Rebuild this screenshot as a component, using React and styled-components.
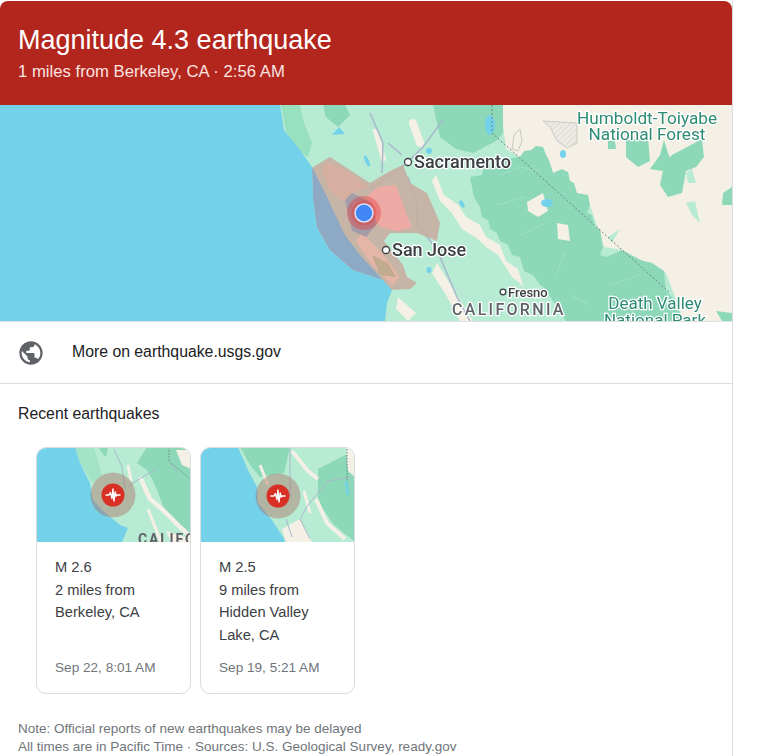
import styled, { createGlobalStyle } from 'styled-components';

const GlobalStyle = createGlobalStyle`
  html, body {
    margin: 0;
    padding: 0;
    background: #fff;
    overflow: hidden;
  }
`;

const Panel = styled.div`
  width: 732px;
  height: 756px;
  box-sizing: content-box;
  overflow: hidden;
  border-right: 1px solid #dadce0;
  font-family: 'Liberation Sans', Arial, sans-serif;
  color: #202124;
`;

const Header = styled.div`
  height: 104px;
  margin-top: 1px;
  box-sizing: border-box;
  padding: 22px 18px 0;
  background: #b3261e;
  border-radius: 8px 8px 0 0;
  color: #fff;
`;

const Title = styled.div`
  font-size: 27px;
  line-height: 34px;
`;

const Subtitle = styled.div`
  margin-top: 4px;
  font-size: 16.7px;
  line-height: 22px;
  color: #fbe3e0;
`;

const HeroMap = styled.svg`
  display: block;
  width: 732px;
  height: 216px;
  filter: blur(0.4px);
`;

const LinkRow = styled.div`
  display: flex;
  align-items: center;
  height: 63px;
  box-sizing: border-box;
  padding-left: 17px;
  border-top: 1px solid #e0e0e0;
  border-bottom: 1px solid #dadce0;
  font-size: 15.8px;
`;

const LinkText = styled.span`
  margin-top: -2px;
`;

const GlobeIcon = styled.svg`
  width: 28px;
  height: 28px;
  margin-right: 27px;
  fill: #5f6368;
`;

const Section = styled.div`
  padding: 20px 18px 0;
`;

const SectionTitle = styled.div`
  font-size: 15.8px;
  line-height: 20px;
`;

const CardRow = styled.div`
  display: flex;
  gap: 9px;
  margin-top: 23px;
  padding-left: 18px;
`;

const Card = styled.div`
  width: 155px;
  height: 247px;
  box-sizing: border-box;
  display: flex;
  flex-direction: column;
  overflow: hidden;
  border: 1px solid #dadce0;
  border-radius: 10px;
`;

const CardMap = styled.svg`
  display: block;
  width: 155px;
  height: 95px;
  margin: -1px -1px 0;
  flex: none;
  filter: blur(0.4px);
`;

const CardBody = styled.div`
  flex: 1;
  display: flex;
  flex-direction: column;
  padding: 14px 10px 14px 18px;
  font-size: 14.7px;
  line-height: 22.5px;
  color: #3c4043;
`;

const CardDate = styled.div`
  margin-top: auto;
  font-size: 13.6px;
  color: #70757a;
`;

const Notes = styled.div`
  margin-top: 26px;
  font-size: 13.5px;
  line-height: 18px;
  color: #70757a;
`;

const MapLabel = styled.text`
  font-family: Roboto, 'Liberation Sans', sans-serif;
  font-size: ${(p) => p.$size || 18}px;
  font-weight: ${(p) => p.$weight || 500};
  letter-spacing: ${(p) => p.$spacing || 0}px;
  fill: ${(p) => p.$color || '#3c4043'};
  stroke: #fff;
  stroke-width: ${(p) => (p.$halo ? 2.5 : 0)}px;
  paint-order: stroke;
  text-anchor: ${(p) => p.$anchor || 'start'};
`;

const OCEAN = '#74d1ea';
const MINT = '#b8ebd4';
const FOREST = '#8dd8b8';
const SAND = '#f5f0e5';
const ROAD = '#a8b8cc';

function City({ x, y, r = 3.5 }) {
  return <circle cx={x} cy={y} r={r} fill="#fff" stroke="#3c4043" strokeWidth="1.3" />;
}

function Hero() {
  return (
    <HeroMap viewBox="0 0 732 216">
      <defs>
        <pattern id="hatch" width="4" height="4" patternUnits="userSpaceOnUse" patternTransform="rotate(45)">
          <rect width="4" height="4" fill="#ecebe6" />
          <rect width="1" height="4" fill="#dcdbd6" />
        </pattern>
      </defs>
      <rect width="732" height="216" fill={MINT} />
      <path d="M490 0H732V216H684L666 168 622 145 604 142 590 100 577 88 553 68 543 42 520 52 506 44 503 20Z" fill={SAND} />

      {/* central valley strips */}
      <path d="M436 70 444 90 458 100 466 112 480 120 486 132 500 140 506 156 518 164 524 184 520 178 512 172 498 150 486 142 478 134 462 124 452 108 440 96 432 76Z" fill={SAND} />
      <path d="M413 18 420 38" fill="none" stroke={SAND} strokeWidth="8" strokeLinecap="round" />
      <path d="M375 24 384 56" fill="none" stroke={SAND} strokeWidth="5" />
      <path d="M437 158 452 182 473 216H460L446 190 432 168Z" fill={SAND} />
      <path d="M398 192 416 208 408 216 396 204Z" fill={SAND} />

      {/* forests */}
      <path d="M470 72 482 70 484 62 500 60 503 54 520 52 524 46 531 45 536 41 543 42 546 50 549 55 553 68 562 64 568 67 570 76 574 78 577 88 588 90 590 100 587 108 592 110 595 122 600 124 603 142 600 150 607 152 622 145 640 155 652 158 664 166 666 186 672 192 684 216H566L556 200 550 192 547 185 540 180 533 170 524 166 520 152 512 150 508 140 500 136 497 128 490 124 488 115 482 112 480 102 474 92Z" fill={FOREST} />
      <path d="M433 0H503V28L496 36 473 48 456 44 440 32Z" fill={FOREST} />
      <path d="M281 0H300L304 18 312 38 308 52 298 46 286 26Z" fill="#99e0c0" />
      <path d="M323 0 345 0 350 10 338 22 326 12Z" fill={FOREST} />
      <path d="M500 70 520 62 540 66M498 100 524 92M520 130 546 118M556 170 566 146M610 180 640 170M570 190 590 200" fill="none" stroke="#a0e1c5" strokeWidth="1" />
      <path d="M527 97 543 88 548 106 538 112 528 106Z" fill={SAND} />
      <path d="M557 118 568 120 570 136 558 134Z" fill={SAND} />
      <path d="M608 132 620 124 612 138Z" fill={MINT} />

      {/* Humboldt-Toiyabe patches */}
      <path d="M626 35 648 33 650 56 638 62 626 52Z" fill={FOREST} />
      <path d="M650 64 660 50 664 35 668 48 672 58 662 66Z" fill={FOREST} />
      <path d="M664 60 672 50 702 34 704 52 696 62 686 66 682 88 668 92 660 80Z" fill={FOREST} />
      <path d="M608 35 615 36 616 44 608 44Z" fill={FOREST} />
      <path d="M686 68 692 64 696 78 688 78Z" fill={MINT} />
      <path d="M723 88 732 82V100H722Z" fill={FOREST} />
      <path d="M686 98 695 96 700 118 692 110Z" fill={MINT} />
      <path d="M716 206 732 208V216H722Z" fill={FOREST} />

      <path d="M543 16 577 18 577 38 567 43 557 36 550 22Z" fill="url(#hatch)" stroke="#c9c9c4" />
      <path d="M514 30 520 24 522 36 518 46 512 44Z" fill="none" stroke="#c9c9c4" />

      {/* water */}
      <path d="M0 0H280L284 25 300 45 312 62 313 92 317 122 330 145 353 165 383 175 392 185 387 198 385 216H0Z" fill={OCEAN} />
      <ellipse cx="490" cy="20" rx="5" ry="10" fill={OCEAN} />
      <ellipse cx="563" cy="49" rx="3" ry="4" fill={OCEAN} />
      <ellipse cx="547" cy="98" rx="6" ry="4" fill={OCEAN} />
      <ellipse cx="429" cy="46" rx="3" ry="3" fill={OCEAN} />
      <ellipse cx="462" cy="99" rx="2" ry="4" fill={OCEAN} transform="rotate(-30 462 99)" />
      <ellipse cx="429" cy="165" rx="2.5" ry="3" fill={OCEAN} />
      <ellipse cx="367" cy="56" rx="2" ry="6" fill={OCEAN} transform="rotate(-25 367 56)" />
      <path d="M339 22 332 30 345 29Z" fill={OCEAN} />

      {/* roads and border */}
      <path d="M370 8 383 38 382 68M443 15 423 42 407 58 370 85M408 72 417 98 417 118 437 145 457 192 470 216M388 38 402 50" fill="none" stroke={ROAD} strokeWidth="1.5" />
      <path d="M492 0V28L670 188" fill="none" stroke="#6d8580" strokeWidth="1" strokeDasharray="2 2" />

      {/* shake intensity */}
      <path d="M313 62 330 52 350 65 370 78 390 66 403 60 410 78 427 88 440 118 437 136 417 128 390 128 384 136 403 160 407 172 417 178 410 184 392 185 383 175 353 165 330 145 317 122 313 92Z" fill="#c8ab9e" fillOpacity="0.85" />
      <path d="M326 56 350 68 368 82 352 88 344 96 330 86 322 66Z" fill="#e2ab9c" fillOpacity="0.6" />
      <path d="M312 62 313 92 317 122 330 145 353 165 383 175 360 150 345 130 333 105 327 92Z" fill="#8ea9c4" />
      <path d="M366 92 378 82 396 80 406 108 412 122 398 126 380 122 372 108Z" fill="#f4a9a4" fillOpacity="0.85" />
      <path d="M362 128 382 148 400 172 392 180 372 160 356 136Z" fill="#ecb5a8" fillOpacity="0.8" />
      <path d="M372 150 388 158 396 172 380 170Z" fill="#b2a783" fillOpacity="0.7" />
      <path d="M345 95 352 88 372 98 376 120 366 132 352 126Z" fill="#8f8cae" fillOpacity="0.6" />
      <circle cx="364" cy="108" r="17" fill="#e03c3c" fillOpacity="0.4" />
      <circle cx="364" cy="108" r="12.5" fill="#e03c3c" fillOpacity="0.35" />
      <circle cx="364" cy="108" r="9" fill="#4285f4" stroke="#dbe4f5" strokeWidth="1.5" />

      <City x={408} y={57} />
      <City x={386} y={145} />
      <City x={503} y={187} r={2.8} />
      <MapLabel x="414" y="63" $halo>Sacramento</MapLabel>
      <MapLabel x="392" y="151" $halo>San Jose</MapLabel>
      <MapLabel x="508" y="192" $size={13} $halo>Fresno</MapLabel>
      <MapLabel x="452" y="210" $size={16} $spacing={2.3} $color="#5f6368" $halo>CALIFORNIA</MapLabel>
      <MapLabel x="647" y="19" $size={17.2} $anchor="middle" $weight={400} $color="#2e8b74" $halo>Humboldt-Toiyabe</MapLabel>
      <MapLabel x="647" y="35" $size={17.2} $anchor="middle" $weight={400} $color="#2e8b74" $halo>National Forest</MapLabel>
      <MapLabel x="655" y="204" $size={17} $anchor="middle" $weight={400} $color="#2e8b74" $halo>Death Valley</MapLabel>
      <MapLabel x="655" y="221" $size={17} $anchor="middle" $weight={400} $color="#2e8b74" $halo>National Park</MapLabel>
    </HeroMap>
  );
}

function QuakeMarker({ x, y }) {
  return (
    <g transform={`translate(${x} ${y})`}>
      <circle r="22.5" fill="#aa6458" fillOpacity="0.4" />
      <circle r="11.5" fill="#d93025" />
      <path d="M-7.5 0H-4L-2.6 -2.5-1 3.5 0 -6 1 6 2.2 -3 3.2 1 4 0H7.5" fill="none" stroke="#fff" strokeWidth="1.4" strokeLinejoin="round" />
    </g>
  );
}

function BerkeleyMap() {
  return (
    <CardMap viewBox="0 0 155 95">
      <rect width="155" height="95" fill={MINT} />
      <path d="M111 0H155V90L142 80 131 70 126 56 121 43 116 32 111 23 101 16Z" fill={FOREST} />
      <path d="M39 0H58L62 14 66 28 56 36 44 16Z" fill="#a3e3c8" />
      <path d="M62 0H72L70 10 66 6Z" fill={FOREST} />
      <path d="M140 3H155V22L146 18Z" fill={SAND} />
      <path d="M104 30 114 52 127 63 144 80 155 90" fill="none" stroke={SAND} strokeWidth="4.5" strokeLinejoin="round" />
      <path d="M92 18 95 34M112 62 125 95" fill="none" stroke={SAND} strokeWidth="3" />
      <path d="M130 84 155 92V95H135Z" fill={SAND} />
      <path d="M0 0H39L44 16 54 36 57 53 66 63 84 78 92 81 86 95H0Z" fill={OCEAN} />
      <path d="M78 2 86 20 89 42M120 22 100 34 92 40M134 16 142 26" fill="none" stroke={ROAD} strokeWidth="1" />
      <path d="M133 0V14L154 32" fill="none" stroke="#5f8a7e" strokeWidth="1" strokeDasharray="1.5 1.5" />
      <QuakeMarker x={77} y={48} />
      <MapLabel x="102" y="97" $size={14} $spacing={1.8} $weight={700} $color="#5f6368">CALIFORNIA</MapLabel>
    </CardMap>
  );
}

function HiddenValleyMap() {
  return (
    <CardMap viewBox="0 0 155 95">
      <rect width="155" height="95" fill={MINT} />
      <path d="M40 0H90L84 26 60 30 50 18Z" fill={FOREST} />
      <path d="M118 22 155 3V95L134 78 118 55Z" fill={FOREST} />
      <path d="M146 0H155V30L148 24Z" fill={SAND} />
      <path d="M92 4 108 24 118 32M116 52 127 76 145 92" fill="none" stroke={SAND} strokeWidth="4" strokeLinejoin="round" />
      <path d="M60 18 68 38M104 44 110 66" fill="none" stroke={SAND} strokeWidth="3" />
      <path d="M82 82 100 72 112 95H86Z" fill={SAND} />
      <path d="M0 0H38L48 23 57 40 58 56 72 73 83 90 85 95H0Z" fill={OCEAN} />
      <path d="M90 0V50M150 30 128 34 108 58 100 72 110 92M86 72 92 90" fill="none" stroke={ROAD} strokeWidth="1" />
      <path d="M147 2V40" fill="none" stroke="#5f8a7e" strokeWidth="1" strokeDasharray="1.5 1.5" />
      <path d="M146 34 148 48" stroke={OCEAN} strokeWidth="2.5" />
      <QuakeMarker x={78} y={49} />
    </CardMap>
  );
}

function App() {
  return (
    <>
      <GlobalStyle />
      <Panel>
        <Header>
          <Title>Magnitude 4.3 earthquake</Title>
          <Subtitle>1 miles from Berkeley, CA · 2:56 AM</Subtitle>
        </Header>
        <Hero />
        <LinkRow>
          <GlobeIcon viewBox="0 0 24 24">
            <path d="M12 2C6.48 2 2 6.48 2 12s4.48 10 10 10 10-4.48 10-10S17.52 2 12 2zm-1 17.93c-3.95-.49-7-3.85-7-7.93 0-.62.08-1.21.21-1.79L9 15v1c0 1.1.9 2 2 2v1.93zm6.9-2.54c-.26-.81-1-1.39-1.9-1.39h-1v-3c0-.55-.45-1-1-1H8v-2h2c.55 0 1-.45 1-1V7h2c1.1 0 2-.9 2-2v-.41c2.93 1.19 5 4.06 5 7.41 0 2.08-.8 3.97-2.1 5.39z" />
          </GlobeIcon>
          <LinkText>More on earthquake.usgs.gov</LinkText>
        </LinkRow>
        <Section>
          <SectionTitle>Recent earthquakes</SectionTitle>
          <CardRow>
            <Card>
              <BerkeleyMap />
              <CardBody>
                <div>M 2.6</div>
                <div>2 miles from Berkeley, CA</div>
                <CardDate>Sep 22, 8:01 AM</CardDate>
              </CardBody>
            </Card>
            <Card>
              <HiddenValleyMap />
              <CardBody>
                <div>M 2.5</div>
                <div>9 miles from Hidden Valley Lake, CA</div>
                <CardDate>Sep 19, 5:21 AM</CardDate>
              </CardBody>
            </Card>
          </CardRow>
          <Notes>
            <div>Note: Official reports of new earthquakes may be delayed</div>
            <div>All times are in Pacific Time · Sources: U.S. Geological Survey, ready.gov</div>
          </Notes>
        </Section>
      </Panel>
    </>
  );
}

export default App;
